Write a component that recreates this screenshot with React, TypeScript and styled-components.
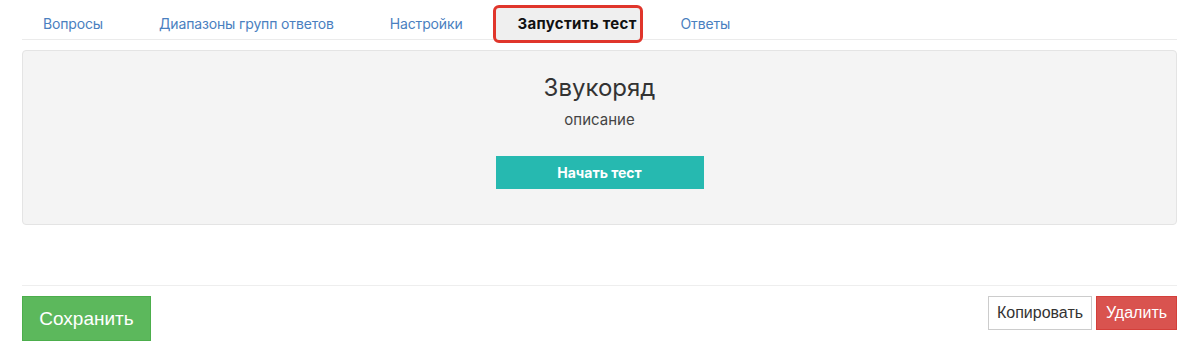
import styled, { createGlobalStyle } from "styled-components";

const GlobalStyle = createGlobalStyle`
  body {
    margin: 0;
    background: #fff;
    font-family: Inter, "Noto Sans", sans-serif;
  }
`

const tabs = ["Вопросы", "Диапазоны групп ответов", "Настройки", "Запустить тест", "Ответы"]
const activeTab = "Запустить тест"

export default function App() {
    return (
        <>
            <GlobalStyle/>
            <Page>
                <TabBar>
                    {tabs.map((tab) => (
                        <Tab key={tab} $active={tab === activeTab}>{tab}</Tab>
                    ))}
                </TabBar>
                <Panel>
                    <Title>Звукоряд</Title>
                    <Description>описание</Description>
                    <StartButton>Начать тест</StartButton>
                </Panel>
                <Footer>
                    <SaveButton>Сохранить</SaveButton>
                    <Actions>
                        <CopyButton>Копировать</CopyButton>
                        <DeleteButton>Удалить</DeleteButton>
                    </Actions>
                </Footer>
            </Page>
        </>
    )
}

const Page = styled.div`
  padding: 0 23px 0 22px;
`

const TabBar = styled.nav`
  display: flex;
  align-items: flex-end;
  height: 39px;
  border-bottom: 1px solid #ebebeb;
`

const Tab = styled.div<{ $active: boolean }>`
  font-size: ${(p) => (p.$active ? "15px" : "14px")};
  line-height: 20px;
  white-space: nowrap;
  cursor: pointer;
  color: ${(p) => (p.$active ? "#111" : "#4a80c0")};
  font-weight: ${(p) => (p.$active ? 700 : 400)};
  letter-spacing: ${(p) => (p.$active ? "0.3px" : "-0.15px")};
  padding: ${(p) => (p.$active ? "0 3px 0 22px" : "0 28px 5px")};

  &:first-child {
    padding-left: 21px;
  }

  ${(p) =>
    p.$active &&
    `
    display: flex;
    align-items: center;
    box-sizing: border-box;
    width: 150px;
    height: 38px;
    margin: 0 10px -4px 2px;
    background: #efefef;
    border: 3px solid #e0352b;
    border-radius: 6px;
  `}
`

const Panel = styled.section`
  margin-top: 10px;
  padding: 22px 0 35px;
  display: flex;
  flex-direction: column;
  align-items: center;
  background: #f4f4f4;
  border: 1px solid #e4e4e4;
  border-radius: 4px;
`

const Title = styled.h2`
  margin: 0;
  font-size: 24px;
  line-height: 30px;
  font-weight: 400;
  color: #333;
`

const Description = styled.p`
  margin: 6px 0 0;
  font-size: 15px;
  line-height: 22px;
  color: #444;
`

const StartButton = styled.button`
  margin-top: 25px;
  width: 208px;
  height: 33px;
  border: none;
  background: #26b9b0;
  color: #fff;
  font-family: Inter, sans-serif;
  font-size: 14px;
  font-weight: 700;
  cursor: pointer;
`

const Footer = styled.div`
  margin-top: 60px;
  padding-top: 10px;
  border-top: 1px solid #eeeeee;
  display: flex;
  justify-content: space-between;
  align-items: flex-start;
`

const Actions = styled.div`
  display: flex;
  gap: 4px;
`

const BaseButton = styled.button`
  font-family: "Liberation Sans", Arial, sans-serif;
  border: 1px solid transparent;
  cursor: pointer;
`

const SaveButton = styled(BaseButton)`
  width: 129px;
  height: 45px;
  font-size: 19px;
  color: #fff;
  background: #5cb85c;
  border-color: #4cae4c;
`

const CopyButton = styled(BaseButton)`
  width: 104px;
  height: 34px;
  font-size: 16px;
  color: #333;
  background: #fff;
  border-color: #ccc;
`

const DeleteButton = styled(BaseButton)`
  width: 81px;
  height: 34px;
  font-size: 16px;
  color: #fff;
  background: #d9534f;
  border-color: #d43f3a;
`
